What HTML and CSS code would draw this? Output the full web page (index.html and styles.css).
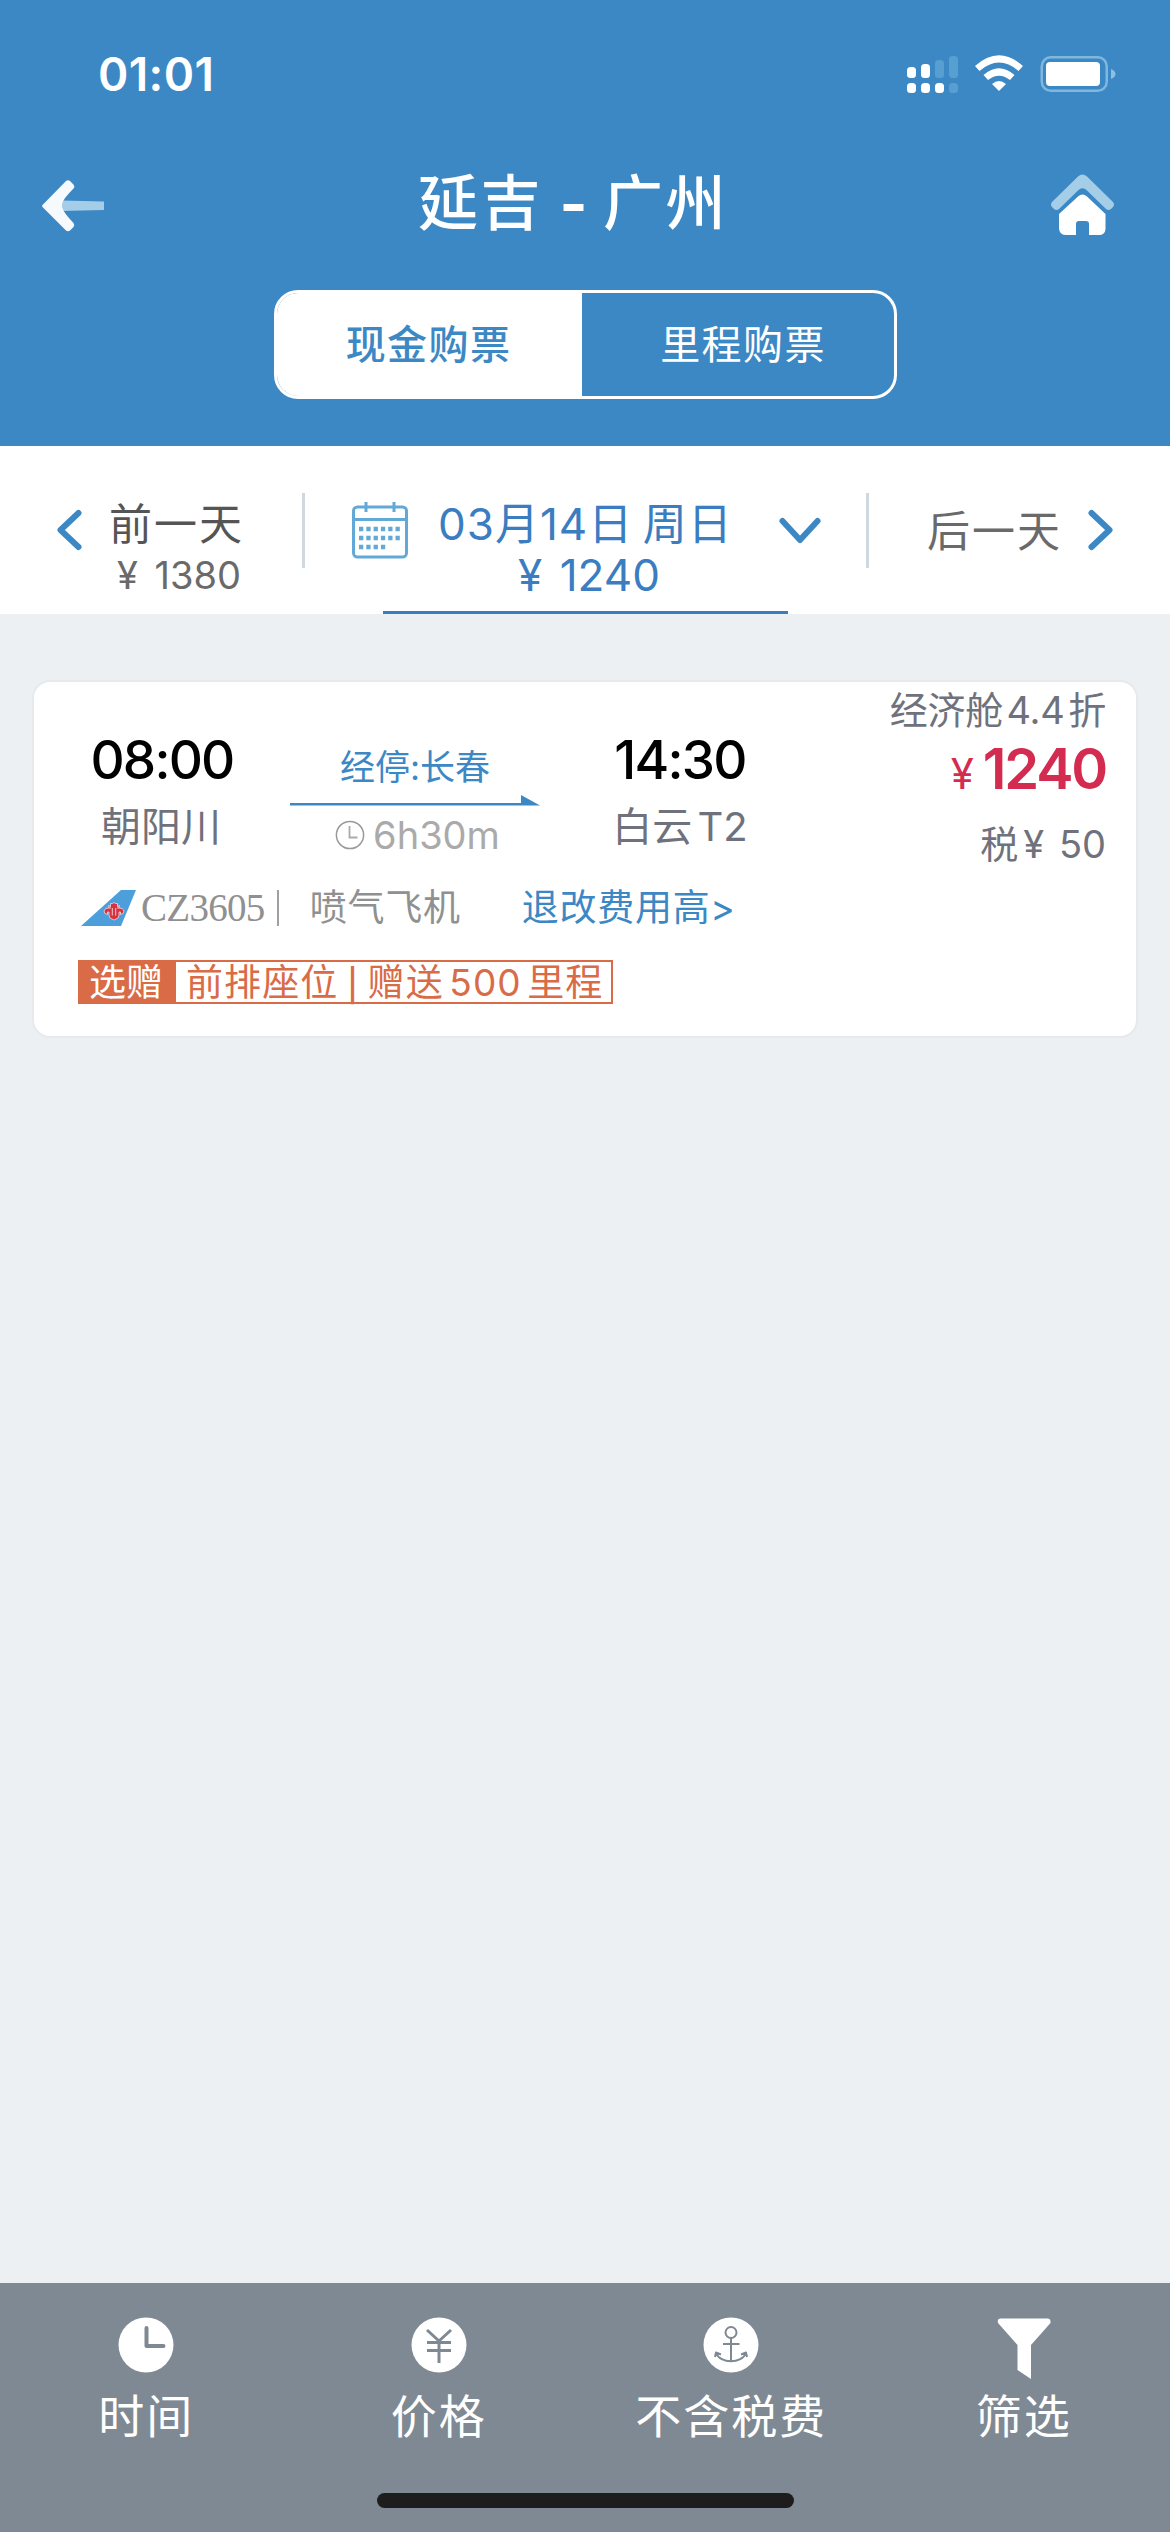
FILE: index.html
```html
<!DOCTYPE html>
<html lang="zh-CN">
<head>
<meta charset="utf-8">
<title>延吉 - 广州</title>
<link rel="stylesheet" href="styles.css">
</head>
<body>
<header class="header">
  <div class="status">
    <span class="clock">01:01</span>
    <svg class="indicators" width="210" height="40" viewBox="907 54 210 40">
      <g fill="#fff"><rect x="907" y="67" width="9" height="11" rx="3.5"/><rect x="921" y="64" width="9" height="14" rx="3.5"/><rect x="907" y="83" width="9" height="10" rx="3.5"/><rect x="921" y="83" width="9" height="10" rx="3.5"/><rect x="935" y="83" width="9" height="10" rx="3.5"/></g>
      <g fill="#589fd1"><rect x="935" y="60" width="9" height="18" rx="3.5"/><rect x="949" y="56" width="9" height="22" rx="3.5"/><rect x="949" y="83" width="9" height="10" rx="3.5"/></g>
      <g fill="#fff"><path d="M975 66Q999 44.500 1023 66L1018.500 71Q999 54 979.500 71Z"/><path d="M983.500 75Q999 61.500 1014.500 75L1010 80Q999 71.500 988 80Z"/><path d="M992 84Q999 78 1006 84L999 91Z"/></g>
      <rect x="1041.750" y="57.250" width="65" height="33.500" rx="9" fill="none" stroke="#7fb7dd" stroke-width="2.500"/>
      <rect x="1046" y="62" width="54" height="24" rx="4" fill="#fff"/>
      <path d="M1111 69Q1115.500 71 1115.500 74T1111 79Z" fill="#8dbfe1"/>
    </svg>
  </div>
  <div class="titlebar">
    <svg class="back" width="64" height="54" viewBox="41 179 64 54"><path d="M61 200.500L104 201.500V210L61 211Z" fill="#a4cde8"/><path d="M42.500 205L66 181Q68 179.500 70 181L73.500 184.500Q75 186.500 73.500 188.500Q63 199 62 204V207Q63 212 73.500 223Q75 225 73.500 227L70 230.500Q68 232 66 230.500L42.500 207Q41.500 206 42.500 205Z" fill="#f6fafd"/></svg>
    <h1 class="title">延吉 <span class="dash">-</span> 广州</h1>
    <svg class="home" width="66" height="64" viewBox="1050 173 66 64"><path d="M1078 176.500Q1082.500 172.500 1087 176.500L1113 202Q1115 204.500 1113 207L1111 209Q1108.500 211 1106 209L1087 190.500Q1082.500 186 1078 190.500L1059 209Q1056.500 211 1054 209L1052 207Q1050 204.500 1052 202Z" fill="#a4cde8"/><path d="M1059 214L1078 196.500Q1082.500 192.500 1087 196.500L1105.500 214V229Q1105 235 1099 235H1089V224Q1089 221 1086 221H1079Q1076 221 1076 224V235H1066Q1060 235 1059 229Z" fill="#fff"/></svg>
  </div>
  <nav class="segments">
    <a class="segment segment-on">现金购票</a>
    <a class="segment">里程购票</a>
  </nav>
</header>
<section class="dates">
  <div class="day prev">
    <svg width="26" height="42" viewBox="0 0 26 42"><path d="M22.500 4L4.500 21L22.500 38" class="chevron"/></svg>
    <div class="prev-text"><span class="day-name dark">前一天</span><span class="day-price">¥ 1380</span></div>
  </div>
  <div class="day current">
    <div class="current-row">
      <svg width="56" height="57" viewBox="0 0 56 57"><rect x="1.500" y="5" width="53" height="50" rx="4" fill="none" stroke="#62a9d8" stroke-width="3"/><path d="M1 17.500H55M14 0V10M42 0V10" stroke="#62a9d8" stroke-width="3"/><path d="M7 27H49M7 36H49M7 45H34" stroke="#62a9d8" stroke-width="4.500" stroke-dasharray="4.300 3"/></svg>
      <span class="current-date">03月14日 周日</span>
      <svg class="down" width="42" height="28" viewBox="0 0 42 28"><path d="M3.500 4L21 23L38.500 4" class="chevron"/></svg>
    </div>
    <span class="current-price">¥ 1240</span>
  </div>
  <div class="day next">
    <span class="day-name">后一天</span>
    <svg width="26" height="42" viewBox="0 0 26 42"><path d="M3.500 4L21.500 21L3.500 38" class="chevron"/></svg>
  </div>
</section>
<main class="results">
  <article class="card">
    <div class="trip">
      <div class="stop-col"><span class="time">08:00</span><span class="airport">朝阳川</span></div>
      <div class="via">
        <span class="via-name">经停:长春</span>
        <svg width="250" height="11" viewBox="0 0 250 11"><path d="M0 8H231V0L250 10.500H0Z" fill="#3c88c5"/></svg>
        <span class="duration"><svg width="30" height="30" viewBox="0 0 30 30"><circle cx="15" cy="15" r="13.600" fill="none" stroke="#999" stroke-width="1.500"/><path d="M14.500 6V17.500H22.500" fill="none" stroke="#aaa" stroke-width="1.800"/></svg><span>6h30m</span></span>
      </div>
      <div class="stop-col arrive"><span class="time">14:30</span><span class="airport terminal">白云 T2</span></div>
      <div class="fare">
        <span class="cabin">经济舱 4.4 折</span>
        <span class="amount"><small>¥</small><b>1240</b></span>
        <span class="tax">税<span class="yen">¥</span> 50</span>
      </div>
    </div>
    <div class="flight">
      <svg width="55" height="36" viewBox="0 0 55 36"><path d="M0 36L40 0H55L40 36Z" fill="#4c9fdb"/><path d="M31 29Q28 28.500 28 25V22H26.500V24.500Q23 24 23 21Q24 17.500 28 18L27.500 15.500L29.500 16.500V13.500H31.500L33 12.500L34.500 13.500H36.500V16.500L38.500 15.500L38 18Q42 17.500 43 21Q43 24 39.500 24.500V22H38V25Q38 28.500 35 29Q33 31 31 29Z" fill="#d8323f" stroke="#f3d9e0" stroke-width=".8"/><path d="M31.300 18V25.500M34.700 18V25.500M29 16.500V19M37 16.500V19" stroke="#f3d9e0" stroke-width=".9"/></svg>
      <span class="number">CZ3605</span><i class="bar"></i>
      <span class="plane">喷气飞机</span>
      <a class="refund">退改费用高&gt;</a>
    </div>
    <div class="perk"><span class="perk-tag">选赠</span><span class="perk-text">前排座位 <span class="sep">|</span> 赠送 500 里程</span></div>
  </article>
</main>
<footer class="footer">
  <div class="tools">
    <a class="tool"><svg width="62" height="64" viewBox="0 0 62 64"><circle cx="31" cy="28" r="27.500" fill="#fff"/><path d="M31.500 11V29H48.500" class="cut thick"/></svg><span>时间</span></a>
    <a class="tool"><svg width="62" height="64" viewBox="0 0 62 64"><circle cx="31" cy="28" r="27.500" fill="#fff"/><path d="M19 13L31 24L43 13M31 24V46M19 25.500H43M19 33.500H43" class="cut"/></svg><span>价格</span></a>
    <a class="tool"><svg width="62" height="64" viewBox="0 0 62 64"><circle cx="31" cy="28" r="27.500" fill="#fff"/><g class="cut thin"><circle cx="31" cy="15.500" r="5.500"/><path d="M31 21V44M23 27H39.500M16 36C20 47 42 47 46 36M15 40L16 35.500L21 37.500M41 37.500L46 35.500L47 40"/></g></svg><span>不含税费</span></a>
    <a class="tool"><svg width="62" height="64" viewBox="0 0 62 64"><path d="M7.500 1.500H54.500Q58 1.500 57.500 6L38 28V62L24.500 53V28L5 6Q4 1.500 7.500 1.500Z" fill="#fff"/></svg><span>筛选</span></a>
  </div>
  <div class="home-bar"></div>
</footer>
</body>
</html>
```
FILE: styles.css
```css
* { box-sizing: border-box; }
body {
  margin: 0;
  width: 1170px;
  height: 2532px;
  display: flex;
  flex-direction: column;
  background: #ecf0f3;
  font-family: Inter, "Noto Sans CJK SC", sans-serif;
  white-space: nowrap;
}
svg { display: block; flex: none; }
.header { height: 446px; background: #3c88c5; color: #fff; }
.status { height: 146px; padding: 54px 53px 0 98px; display: flex; justify-content: space-between; }
.clock { font-size: 46px; line-height: 41px; font-weight: 600; letter-spacing: 0.400px; }
.titlebar { height: 144px; padding: 0 54px 0 41px; display: flex; }
.back { margin-top: 33px; }
.home { margin: 27px 0 0 auto; }
.title { margin: 27px 0 0 313px; font-size: 60px; line-height: 60px; font-weight: 500; letter-spacing: 2.500px; word-spacing: -2px; }
.dash { font-weight: 700; letter-spacing: -1px; }
.segments { width: 623px; height: 109px; margin-left: 274px; border: 3px solid #fff; border-radius: 24px; overflow: hidden; display: flex; }
.segment { flex: 1; padding: 0 0 6px 10px; display: flex; align-items: center; justify-content: center; font-size: 40px; letter-spacing: 1.400px; }
.segment-on { flex: 0 0 305px; padding: 0 2px 6px 0; background: #fff; color: #3c88c5; font-weight: 500; }

.dates { height: 168px; background: #fff; display: flex; color: #6a6a6a; }
.chevron { fill: none; stroke: #3c88c5; stroke-width: 6; stroke-linecap: round; stroke-linejoin: round; }
.day { display: flex; }
.prev { width: 302px; padding: 63px 0 0 56px; gap: 26px; }
.prev-text { display: flex; flex-direction: column; align-items: flex-end; width: 136px; margin-top: -10px; }
.day-name { font-size: 43px; line-height: 50px; letter-spacing: 2px; }
.dark { color: #555; }
.day-price { font-size: 38px; line-height: 40px; margin: 6px 3px 0 0; word-spacing: 6px; }
.current { width: 567px; flex-direction: column; align-items: center; color: #3a7dc0; position: relative; }
.current::before, .current::after { content: ""; position: absolute; top: 47px; width: 3px; height: 75px; background: #cfd8df; }
.current::before { left: 0; }
.current::after { right: 0; }
.current-row { width: 100%; padding: 56px 0 0 50px; display: flex; }
.current-date { margin-left: 30px; width: 341px; font-size: 44px; line-height: 44px; letter-spacing: 1px; word-spacing: -4px; }
.down { margin-top: 15px; }
.current-price { width: 405px; height: 55px; padding-left: 7px; line-height: 33px; font-size: 44px; word-spacing: 5px; text-align: center; border-bottom: 3px solid #3a7dc0; }
.next { padding: 63px 0 0 58px; gap: 26px; }
.next .day-name { line-height: 44px; }

.results { flex: 1; padding: 66px 32px 0; }
.card { height: 358px; background: #fff; border: 2px solid #e6eaed; border-radius: 18px; }
.trip { height: 186px; display: flex; }
.stop-col { width: 256px; padding-top: 48px; display: flex; flex-direction: column; align-items: center; }
.arrive { width: 280px; }
.time { color: #000; font-size: 53px; line-height: 60px; font-weight: 500; letter-spacing: -1.800px; }
.airport { margin: 12px 2px 0 0; font-size: 40px; line-height: 50px; color: #6f727c; }
.terminal { margin-right: 0; word-spacing: -6px; }
.via { width: 250px; padding-top: 65px; display: flex; flex-direction: column; align-items: center; }
.via-name { font-size: 35px; line-height: 40px; margin-bottom: 8px; color: #3c88c5; }
.duration { margin: 9px 0 0 5px; display: flex; align-items: center; gap: 8px; font-size: 38px; line-height: 40px; color: #aaa; }
.fare { flex: 1; padding: 8px 30px 0 0; display: flex; flex-direction: column; align-items: flex-end; font-size: 38px; line-height: 40px; color: #6f727c; }
.cabin { word-spacing: -7px; letter-spacing: -0.200px; }
.amount { height: 60px; margin: 9px 0 25px; display: flex; gap: 9px; line-height: 60px; color: #d42c50; }
.amount small { font-size: 42px; margin-top: 5px; }
.amount b { font-size: 56px; font-weight: 600; letter-spacing: -2.200px; }
.tax { word-spacing: 4px; }
.yen { margin-left: 5px; }
.flight { margin: 20px 0 0 47px; height: 40px; display: flex; align-items: center; font-size: 37px; line-height: 40px; color: #909090; }
.number { margin-left: 5px; font-family: "Liberation Serif", serif; font-size: 39px; letter-spacing: -0.700px; }
.bar { width: 2px; height: 36px; margin-left: 12px; background: #a0a0a0; }
.plane { margin-left: 31px; letter-spacing: 0.800px; }
.refund { margin-left: 61px; color: #3c88c5; letter-spacing: 0.700px; }
.perk { margin: 32px 0 0 44px; width: 535px; height: 44px; border: 2px solid #d96b47; display: flex; font-size: 37px; line-height: 41px; color: #d96b47; }
.perk-tag { width: 96px; padding-left: 9px; background: #d96b47; color: #fff; }
.perk-text { padding-left: 10px; letter-spacing: 1.100px; word-spacing: -6px; }
.sep { margin: 0 3px 0 3px; font-size: 32px; line-height: 30px; vertical-align: -1px; font-weight: 500; }

.footer { height: 249px; background: #7f8993; color: #fff; }
.tools { height: 210px; display: grid; grid-template-columns: repeat(4, 1fr); }
.tool { padding-top: 34px; display: flex; flex-direction: column; align-items: center; font-size: 46px; line-height: 56px; letter-spacing: 2px; }
.tool span { margin-top: 7px; }
.cut { fill: none; stroke: #7f8993; stroke-width: 3; stroke-linejoin: round; }
.thick { stroke-width: 4; stroke-linecap: round; }
.thin { stroke-width: 2; }
.home-bar { width: 417px; height: 15px; margin: 0 auto; border-radius: 8px; background: #1d1d1d; }
```
